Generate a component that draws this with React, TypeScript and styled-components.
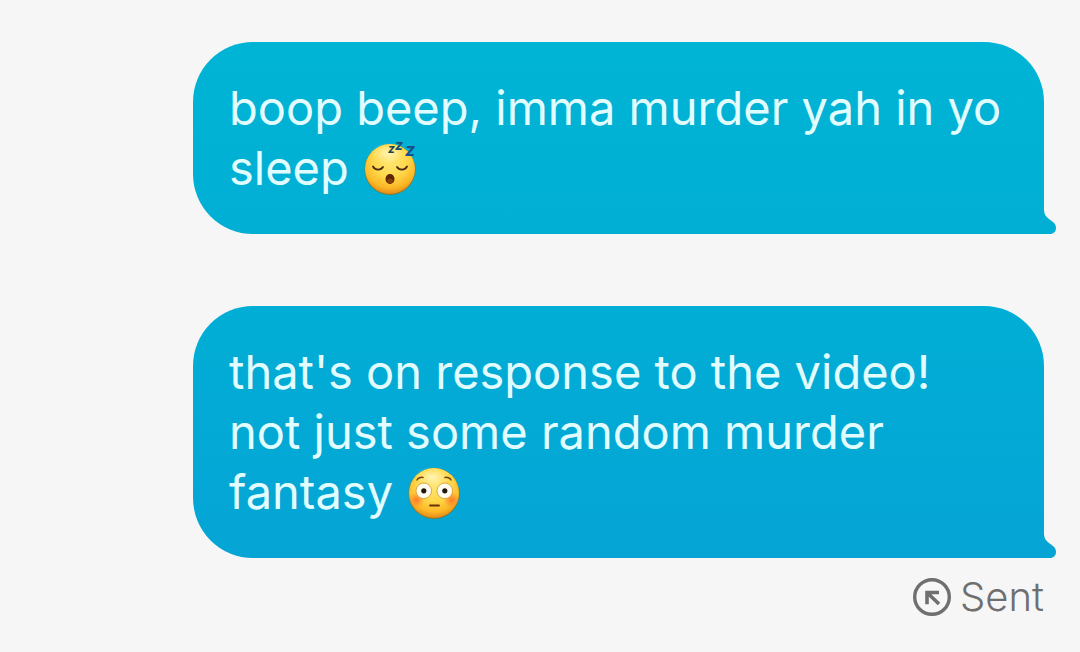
import React from "react";
import styled, { createGlobalStyle } from "styled-components";

const GlobalStyle = createGlobalStyle`
  * { box-sizing: border-box; }
  body {
    margin: 0;
    background: #f6f6f6;
    font-family: Inter, Roboto, "Liberation Sans", sans-serif;
  }
`;

const Thread = styled.main`
  display: flex;
  flex-direction: column;
  gap: 72px;
  min-height: 100vh;
  padding: 42px 36px 32px 193px;
`;

const Message = styled.article`
  display: flex;
  flex-direction: column;
`;

const Bubble = styled.div<{ $from: string; $to: string }>`
  position: relative;
  padding: 36px;
  border-radius: 60px 60px 0 60px;
  background: linear-gradient(${(p) => p.$from}, ${(p) => p.$to});
  color: #e2fdff;
`;

const Text = styled.p`
  margin: 0;
  font-size: 47px;
  line-height: 60px;
  white-space: pre-line;
`;

const TailShape = styled.svg`
  position: absolute;
  right: -12px;
  bottom: 0;
  display: block;
`;

const EmojiShape = styled.svg`
  display: inline-block;
  width: 56px;
  height: 56px;
  vertical-align: -12px;
  overflow: visible;
`;

const Status = styled.footer`
  display: flex;
  align-items: center;
  justify-content: flex-end;
  gap: 8px;
  margin-top: 15px;
  color: #6f6f6f;
  font-size: 40px;
  font-weight: 300;
  line-height: 48px;
`;

const Tail = ({ color }: { color: string }) => (
  <TailShape width="13" height="28" viewBox="0 0 13 28" aria-hidden="true">
    <path d="M0 0H1V4C1 8 3 11 6 13L10 16C12 17.500 13 19.500 13 22C13 25.500 10.500 28 7 28H0Z" fill={color} />
  </TailShape>
);

const FaceBase = ({ id }: { id: string }) => (
  <>
    <defs>
      <radialGradient id={id} cx="50%" cy="32%" r="68%">
        <stop offset="0" stopColor="#ffe778" />
        <stop offset="0.5" stopColor="#ffd84b" />
        <stop offset="0.82" stopColor="#fbb726" />
        <stop offset="1" stopColor="#e58a16" />
      </radialGradient>
      <radialGradient id={`${id}-shine`}>
        <stop offset="0" stopColor="#fff8c8" stopOpacity="0.85" />
        <stop offset="1" stopColor="#fff3a0" stopOpacity="0" />
      </radialGradient>
      <radialGradient id={`${id}-blush`}>
        <stop offset="0" stopColor="#ff6a2b" stopOpacity="0.85" />
        <stop offset="1" stopColor="#ff7a2b" stopOpacity="0" />
      </radialGradient>
    </defs>
    <circle cx="28" cy="28.500" r="25.500" fill="#7d7a32" />
    <circle cx="28" cy="28" r="25" fill={`url(#${id})`} />
    <ellipse cx="26" cy="12" rx="17" ry="10" fill={`url(#${id}-shine)`} />
  </>
);

const SleepingFace = () => (
  <EmojiShape viewBox="0 0 56 56" role="img" aria-label="sleeping face">
    <FaceBase id="sleep" />
    <g fill="none" stroke="#4a2b10" strokeWidth="1.800" strokeLinecap="round">
      <path d="M11 25.500C13 29.500 19 29.500 21 26" />
      <path d="M35 26C37 29.500 43 29.500 45 25.500" />
    </g>
    <ellipse cx="28" cy="38" rx="4.500" ry="5" fill="#5c2405" />
    <ellipse cx="28" cy="40" rx="3" ry="2.500" fill="#8a3c0b" />
    <text y="12" fontFamily="Inter, sans-serif" fontWeight="700" fontStyle="italic">
      <tspan x="26" fontSize="12" fill="#1d4148">z</tspan>
      <tspan x="33" dy="-3" fontSize="14" fill="#17507a">z</tspan>
      <tspan x="43" dy="6" fontSize="18" fill="#16508f">z</tspan>
    </text>
  </EmojiShape>
);

const FlushedFace = () => (
  <EmojiShape viewBox="0 0 56 56" role="img" aria-label="flushed face">
    <FaceBase id="flush" />
    <ellipse cx="10.500" cy="35" rx="8" ry="8" fill="url(#flush-blush)" />
    <ellipse cx="45.500" cy="35" rx="8" ry="8" fill="url(#flush-blush)" />
    <g fill="none" stroke="#70420f" strokeWidth="1.500" strokeLinecap="round">
      <path d="M11 15C12 13 15 12 17 12.500" />
      <path d="M39 12.500C41 12 44 13 45 15" />
    </g>
    <g fill="#fffdf0" stroke="#d89428" strokeWidth="0.800">
      <circle cx="17.800" cy="25.800" r="7.800" />
      <circle cx="38.800" cy="25.800" r="7.800" />
    </g>
    <circle cx="17.800" cy="25.800" r="2.600" fill="#24170c" />
    <circle cx="38.800" cy="25.800" r="2.600" fill="#24170c" />
    <path d="M24 40.500H33" stroke="#6b3209" strokeWidth="1.800" strokeLinecap="round" />
  </EmojiShape>
);

const SentIcon = () => (
  <svg width="40" height="40" viewBox="0 0 40 40" fill="none" stroke="#6f6f6f" aria-hidden="true">
    <circle cx="20" cy="20" r="17.300" strokeWidth="3.400" />
    <path d="M15 27.300V15.500H27M15.500 16L27 27" strokeWidth="3.600" />
  </svg>
);

export default function App() {
  return (
    <>
      <GlobalStyle />
      <Thread>
        <Message>
          <Bubble $from="#00b4d5" $to="#01afd4">
            <Text>
              {"boop beep, imma murder yah in yo sleep "}
              <SleepingFace />
            </Text>
            <Tail color="#01afd4" />
          </Bubble>
        </Message>
        <Message>
          <Bubble $from="#01aed5" $to="#05a4d5">
            <Text>
              {"that's on response to the video!\nnot just some random murder fantasy "}
              <FlushedFace />
            </Text>
            <Tail color="#05a4d5" />
          </Bubble>
          <Status>
            <SentIcon />
            Sent
          </Status>
        </Message>
      </Thread>
    </>
  );
}
